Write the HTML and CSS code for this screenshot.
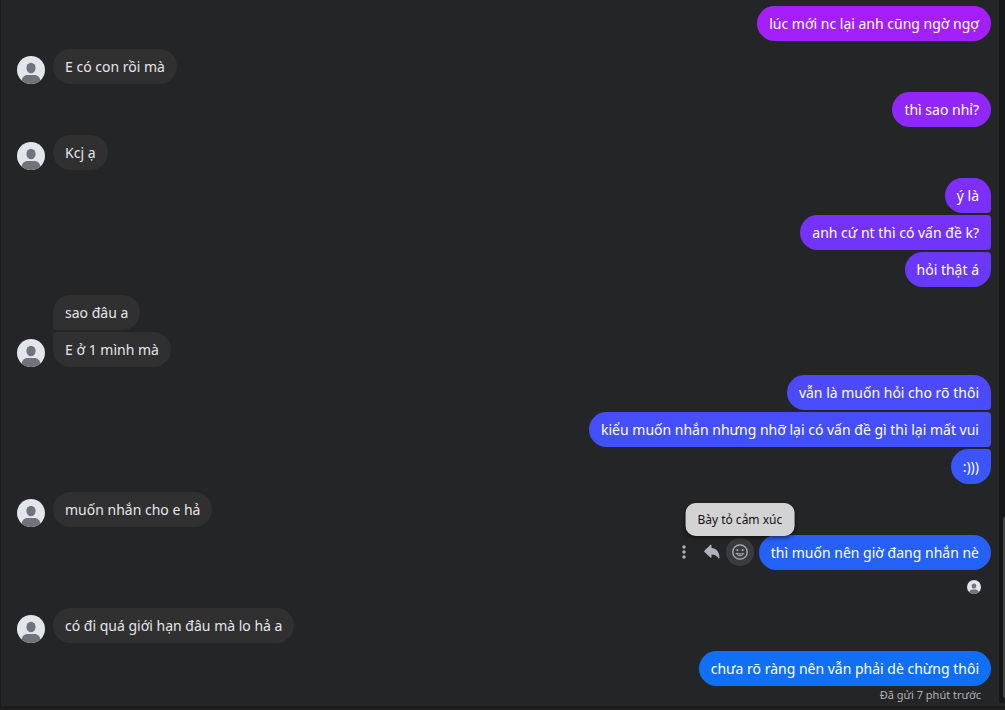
FILE: index.html
```html
<!DOCTYPE html>
<html lang="vi">
<head>
<meta charset="utf-8">
<meta name="viewport" content="width=device-width, initial-scale=1">
<title>Đoạn chat</title>
<link rel="stylesheet" href="styles.css">
</head>
<body>
<svg class="defs" width="0" height="0" aria-hidden="true">
  <symbol id="person" viewBox="0 0 28 28">
    <circle cx="14" cy="14" r="14" fill="#e2e5ea"/>
    <ellipse cx="14" cy="12" rx="4.6" ry="5.2" fill="#70747a"/>
    <path d="M4.6 24.4C5.2 20.8 8 19 11 19h6c3 0 5.800 1.800 6.400 5.400A14 14 0 0 1 4.600 24.400Z" fill="#70747a"/>
  </symbol>
</svg>
<div class="window">
  <main class="chat">
    <div class="group sent"><p class="bubble">lúc mới nc lại anh cũng ngờ ngợ</p></div>
    <div class="group received"><svg class="avatar"><use href="#person"/></svg><div class="stack"><p class="bubble">E có con rồi mà</p></div></div>
    <div class="group sent"><p class="bubble">thì sao nhỉ?</p></div>
    <div class="group received"><svg class="avatar"><use href="#person"/></svg><div class="stack"><p class="bubble">Kcj ạ</p></div></div>
    <div class="group sent">
      <p class="bubble">ý là</p>
      <p class="bubble">anh cứ nt thì có vấn đề k?</p>
      <p class="bubble">hỏi thật á</p>
    </div>
    <div class="group received"><svg class="avatar"><use href="#person"/></svg><div class="stack"><p class="bubble">sao đâu a</p><p class="bubble">E ở 1 mình mà</p></div></div>
    <div class="group sent">
      <p class="bubble">vẫn là muốn hỏi cho rõ thôi</p>
      <p class="bubble">kiểu muốn nhắn nhưng nhỡ lại có vấn đề gì thì lại mất vui</p>
      <p class="bubble">:)))</p>
    </div>
    <div class="group received"><svg class="avatar"><use href="#person"/></svg><div class="stack"><p class="bubble">muốn nhắn cho e hả</p></div></div>
    <div class="group active">
      <div class="actions">
        <button class="action" type="button" aria-label="Xem thêm">
          <svg width="16" height="16" viewBox="0 0 16 16" fill="currentColor"><circle cx="8" cy="3" r="1.700"/><circle cx="8" cy="8" r="1.700"/><circle cx="8" cy="13" r="1.700"/></svg>
        </button>
        <button class="action" type="button" aria-label="Trả lời">
          <svg width="16" height="16" viewBox="0 0 16 16" fill="currentColor"><path d="M.5 6.500 6.300 1.100c.6-.5 1.200-.2 1.200.5v2.500c4.700.3 7.600 3.200 8 9.600 0 1-.7 1.200-1.200.4-1.400-2.400-3.300-3.500-6.800-3.600v2.400c0 .8-.6 1-1.200.5L.5 8.100c-.5-.5-.5-1.100 0-1.600Z"/></svg>
        </button>
        <button class="action hover" type="button" aria-label="Bày tỏ cảm xúc" aria-describedby="tip">
          <svg width="16" height="16" viewBox="0 0 16 16" fill="none" stroke="currentColor" stroke-width="1.300" stroke-linecap="round"><circle cx="8" cy="8" r="7.200"/><path d="M4.400 9.400c.8 1.600 2 2.400 3.600 2.400s2.800-.8 3.600-2.400c-2.300.8-4.900.8-7.200 0Z" stroke-width="1" stroke-linejoin="round"/><path d="M5.400 6v.2M10.600 6v.2" stroke-width="1.800"/></svg>
          <span class="tooltip" id="tip" role="tooltip">Bày tỏ cảm xúc</span>
        </button>
      </div>
      <p class="bubble">thì muốn nên giờ đang nhắn nè</p>
    </div>
    <div class="seen"><svg class="seen-avatar"><use href="#person"/></svg></div>
    <div class="group received"><svg class="avatar"><use href="#person"/></svg><div class="stack"><p class="bubble">có đi quá giới hạn đâu mà lo hả a</p></div></div>
    <div class="group sent"><p class="bubble">chưa rõ ràng nên vẫn phải dè chừng thôi</p></div>
    <p class="status">Đã gửi 7 phút trước</p>
  </main>
  <div class="track" aria-hidden="true"><div class="thumb"></div></div>
</div>
</body>
</html>
```
FILE: styles.css
```css
* { box-sizing: border-box; }

body {
  margin: 0;
  background: #242527;
  color: #e4e6eb;
  font: 14px/19px "Segoe UI", "Noto Sans", "Open Sans", sans-serif;
}

p { margin: 0; }

.defs { display: block; height: 0; }

.window {
  display: flex;
  min-height: 100vh;
  border-left: 1px solid #1a1b1c;
  border-bottom: 4px solid #1c1c1d;
}

.chat {
  flex: 1;
  display: flex;
  flex-direction: column;
  gap: 8px;
  padding: 6px 8px 0 16px;
}

.group { display: flex; }

.sent {
  flex-direction: column;
  align-items: flex-end;
  gap: 2px;
}

.received {
  align-items: flex-end;
  gap: 8px;
}

.stack {
  display: flex;
  flex-direction: column;
  align-items: flex-start;
  gap: 2px;
}

.bubble {
  padding: 8px 12px;
  border-radius: 18px;
}

.sent .bubble,
.active .bubble {
  color: #fff;
  background: linear-gradient(#a91df9 0%, #7333f8 33%, #4250fa 61%, #2561f6 78%, #1070f5 94%) fixed;
}

.received .bubble { background: #303030; }

.sent .bubble:not(:last-child) { border-bottom-right-radius: 4px; }
.sent .bubble:not(:first-child) { border-top-right-radius: 4px; }
.stack .bubble:not(:last-child) { border-bottom-left-radius: 4px; }
.stack .bubble:not(:first-child) { border-top-left-radius: 4px; }

.avatar {
  flex: none;
  width: 28px;
  height: 28px;
}

.active {
  justify-content: flex-end;
  align-items: flex-start;
  gap: 5px;
}

.actions {
  display: flex;
  padding-top: 3px;
}

.action {
  position: relative;
  display: grid;
  place-items: center;
  width: 28px;
  height: 28px;
  padding: 0;
  border: 0;
  border-radius: 50%;
  background: none;
  color: #b0b3b8;
  font: inherit;
}

.hover { background: #3a3b3c; }

.tooltip {
  position: absolute;
  bottom: 100%;
  left: 50%;
  margin-bottom: 2px;
  transform: translateX(-50%);
  padding: 8px 12px;
  border-radius: 10px;
  background: #d3d3d3;
  color: #101112;
  box-shadow: 0 2px 4px rgba(0, 0, 0, 0.5);
  font-size: 12px;
  line-height: 17px;
  white-space: nowrap;
}

.seen {
  display: flex;
  justify-content: flex-end;
  padding: 2px 10px 6px 0;
}

.seen-avatar {
  width: 14px;
  height: 14px;
}

.status {
  margin-top: -8px;
  padding-right: 10px;
  color: #b0b3b8;
  font-size: 11px;
  line-height: 18px;
  text-align: right;
}

.track {
  flex: none;
  display: flex;
  flex-direction: column;
  justify-content: flex-end;
  align-items: flex-end;
  width: 6px;
  margin-bottom: 3px;
  padding-bottom: 5px;
  background: #161717;
}

.thumb {
  width: 2px;
  height: 26%;
  border-radius: 2px 0 0 2px;
  background: #434444;
}
```
